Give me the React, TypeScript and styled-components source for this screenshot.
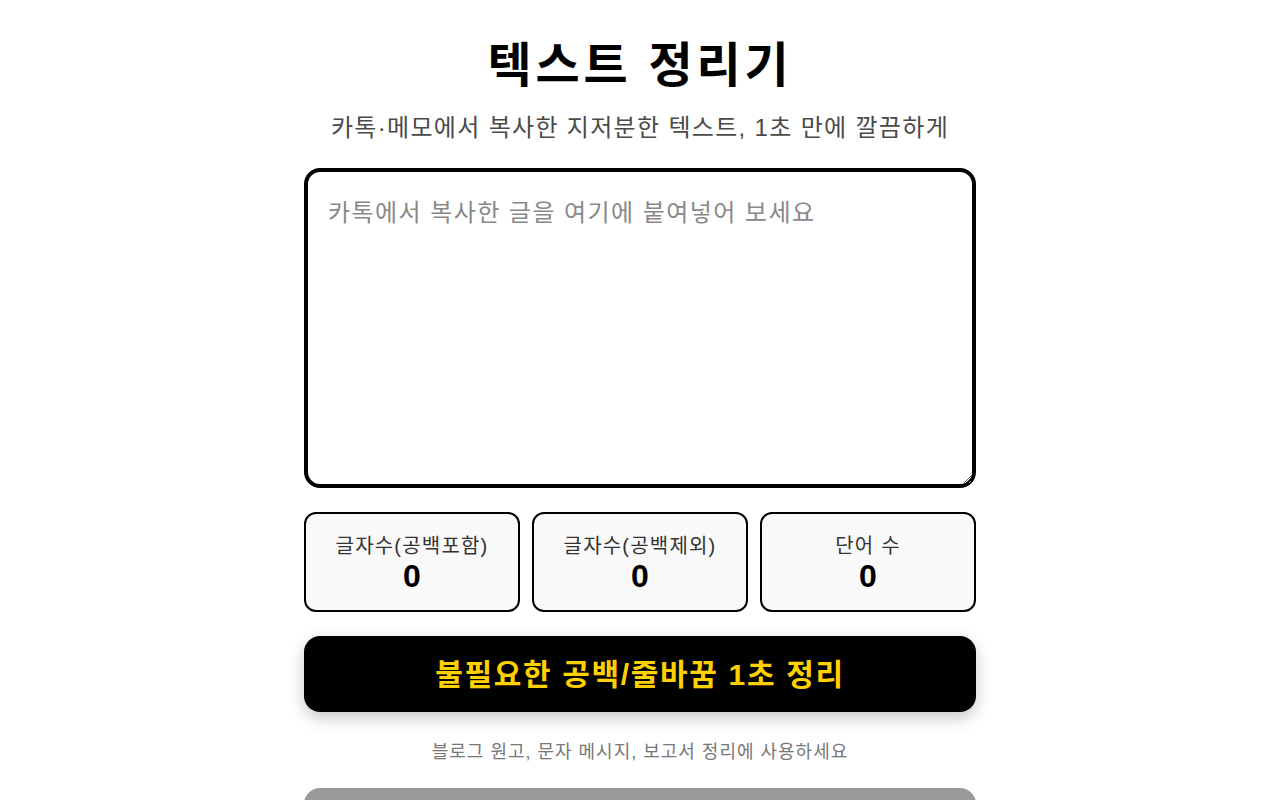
import React, { useState } from 'react'
import styled, { createGlobalStyle } from 'styled-components'

const GlobalStyle = createGlobalStyle`
  * {
    box-sizing: border-box;
  }
  body {
    margin: 0;
    background: #fff;
    font-family: "Liberation Sans", Arial, "Noto Sans CJK KR", sans-serif;
    color: #000;
  }
`

const Container = styled.div`
  max-width: 672px;
  margin: 0 auto;
  padding: 37px 0 40px;
  display: flex;
  flex-direction: column;
`

const Title = styled.h1`
  margin: 0;
  font-size: 48px;
  line-height: 58px;
  font-weight: 700;
  letter-spacing: 0.08em;
  text-align: center;
  color: #000;
`

const Subtitle = styled.p`
  margin: 16px 0 0;
  font-size: 24px;
  line-height: 34px;
  letter-spacing: 0.055em;
  text-align: center;
  color: #4a4a4a;
`

const TextArea = styled.textarea`
  margin-top: 23px;
  width: 100%;
  height: 320px;
  padding: 23px 20px 20px;
  border: 4px solid #000;
  border-radius: 16px;
  font-family: inherit;
  font-size: 24px;
  line-height: 1.5;
  letter-spacing: 0.06em;
  color: #111;
  resize: vertical;
  outline: none;

  &::placeholder {
    color: #888;
  }
`

const StatsRow = styled.div`
  margin-top: 24px;
  display: grid;
  grid-template-columns: repeat(3, 1fr);
  gap: 12px;
`

const StatCard = styled.div`
  height: 100px;
  border: 2px solid #000;
  border-radius: 12px;
  background: #f9f9f9;
  display: flex;
  flex-direction: column;
  align-items: center;
  justify-content: center;
`

const StatLabel = styled.div`
  font-size: 20px;
  line-height: 28px;
  letter-spacing: 0.06em;
  color: #333;
`

const StatValue = styled.div`
  font-size: 32px;
  line-height: 32px;
  font-weight: 700;
  color: #000;
`

const Button = styled.button<{ $variant?: 'primary' | 'muted' }>`
  width: 100%;
  height: 76px;
  padding: 0 0 4px;
  border: none;
  border-radius: 16px;
  font-family: inherit;
  font-size: 30px;
  font-weight: 700;
  letter-spacing: 0.055em;
  cursor: pointer;
  background: ${p => (p.$variant === 'muted' ? '#999' : '#000')};
  color: ${p => (p.$variant === 'muted' ? '#fff' : '#ffd000')};
  box-shadow: ${p => (p.$variant === 'muted' ? 'none' : '0 6px 16px rgba(0, 0, 0, 0.22)')};
`

const PrimaryWrap = styled.div`
  margin-top: 24px;
`

const Hint = styled.p`
  margin: 28px 0 0;
  font-size: 18px;
  line-height: 24px;
  letter-spacing: 0.055em;
  text-align: center;
  color: #777;
`

const SecondaryWrap = styled.div`
  margin-top: 24px;
`

function countStats(text: string) {
  const withSpaces = text.length
  const withoutSpaces = text.replace(/\s/g, '').length
  const words = text.trim() ? text.trim().split(/\s+/).length : 0
  return { withSpaces, withoutSpaces, words }
}

export default function App() {
  const [text, setText] = useState('')
  const stats = countStats(text)

  const handleClean = () => {
    const cleaned = text
      .split('\n')
      .map(line => line.replace(/[ \t]+/g, ' ').trim())
      .filter(line => line.length > 0)
      .join('\n')
    setText(cleaned)
  }

  return (
    <>
      <GlobalStyle />
      <Container>
        <Title>텍스트 정리기</Title>
        <Subtitle>카톡·메모에서 복사한 지저분한 텍스트, 1초 만에 깔끔하게</Subtitle>

        <TextArea
          placeholder="카톡에서 복사한 글을 여기에 붙여넣어 보세요"
          value={text}
          onChange={e => setText(e.target.value)}
        />

        <StatsRow>
          <StatCard>
            <StatLabel>글자수(공백포함)</StatLabel>
            <StatValue>{stats.withSpaces}</StatValue>
          </StatCard>
          <StatCard>
            <StatLabel>글자수(공백제외)</StatLabel>
            <StatValue>{stats.withoutSpaces}</StatValue>
          </StatCard>
          <StatCard>
            <StatLabel>단어 수</StatLabel>
            <StatValue>{stats.words}</StatValue>
          </StatCard>
        </StatsRow>

        <PrimaryWrap>
          <Button onClick={handleClean}>불필요한 공백/줄바꿈 1초 정리</Button>
        </PrimaryWrap>

        <Hint>블로그 원고, 문자 메시지, 보고서 정리에 사용하세요</Hint>

        <SecondaryWrap>
          <Button $variant="muted" disabled={!text}>정리된 텍스트 복사하기</Button>
        </SecondaryWrap>
      </Container>
    </>
  )
}
